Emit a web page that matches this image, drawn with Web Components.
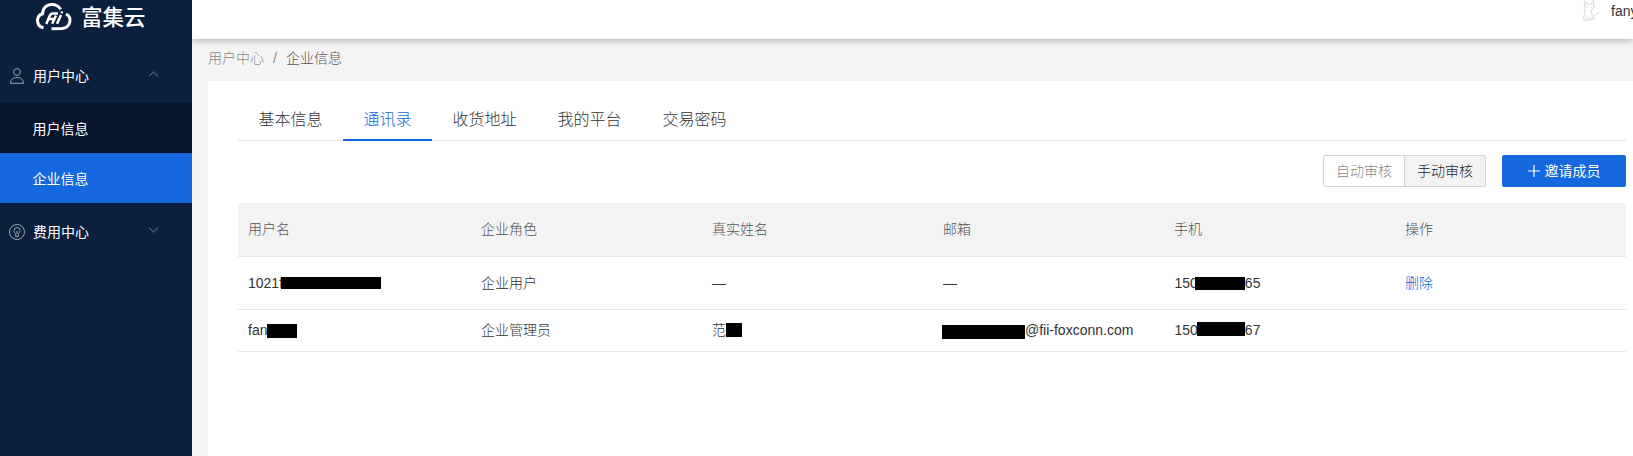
<!DOCTYPE html>
<html lang="zh-CN">
<head>
<meta charset="utf-8">
<title>富集云</title>
<style>
html,body{margin:0;height:456px;overflow:hidden}
body{font:14px/20px "Liberation Sans","Noto Sans CJK SC",sans-serif;color:#333}
</style>
</head>
<body>
<fii-app></fii-app>
<script>
const define = (name, html, setup) => {
  const t = document.createElement('template');
  t.innerHTML = html;
  customElements.define(name, class extends HTMLElement {
    constructor() {
      super();
      this.attachShadow({mode: 'open'}).append(t.content.cloneNode(true));
      if (setup) setup(this.shadowRoot, this);
    }
  });
};

define('fii-logo', `<style>
:host{display:flex;height:50px;padding-left:35px;color:#fff}
svg{flex:none;margin-top:1px}
b{font-size:21.5px;line-height:32px;font-weight:500;margin-left:8px;margin-top:2px;white-space:nowrap}
</style>
<svg width="38" height="32" viewBox="0 0 38 32" fill="none" stroke="#fff" stroke-width="3">
<path d="M8.500 26.800C4 25.800 2.300 22.300 2.500 19c.3-3.500 2.400-5.500 5.100-6.300C7.500 7.200 11.500 3.400 17 3.400c3.900 0 6.900 2 8.700 4.900"/>
<path d="M31 13c3.300 1.700 4.600 4.500 3.800 8-.9 4.200-4 6.100-7.800 6.500l-10.500.2"/>
<path d="M11.300 23 L14.500 15.200Q15.500 12.500 17.800 12.500H23M13.200 18H20M21 14.500L17.200 22.800M26 14L22 22.800" stroke-width="2.500"/>
<path d="M25.700 11.400h2.300" stroke-width="2"/>
</svg><b>富集云</b>`);

define('fii-menu-group', `<style>
:host{display:flex;align-items:center;box-sizing:border-box;height:var(--h,54px);padding:0 33px var(--b,0) 9px;color:#fff}
.i{display:flex;width:16px;height:16px}
.t{margin-left:8px;flex:1;white-space:nowrap}
.a{margin-bottom:3px}
</style><span class="i"><slot name="icon"></slot></span><span class="t"><slot></slot></span>
<svg class="a" width="11" height="6" viewBox="0 0 11 6" fill="none" stroke="#7e8997"><path d="M1 5.300 5.500.900 10 5.300"/></svg>`,
(r, el) => { if (el.hasAttribute('closed')) r.querySelector('.a').style.transform = 'scaleY(-1)'; });

define('fii-menu-item', `<style>
:host{display:flex;align-items:center;box-sizing:border-box;height:50px;padding:2px 0 0 32.500px;background:#06152b;color:#fff}
:host([active]){background:#1467dc}
</style><slot></slot>`);

define('fii-sidebar', `<style>
:host{display:block;width:192px;height:456px;background:#0b203c}
</style>
<fii-logo></fii-logo>
<fii-menu-group style="--h:53px;--b:2px"><svg slot="icon" width="16" height="16" viewBox="0 0 16 16" fill="none" stroke="#9ba5b1"><circle cx="8" cy="4" r="3.400"/><path d="M1.500 15.300C1.500 11.500 4 9.500 8 9.500s6.500 2 6.500 5.800Z"/></svg>用户中心</fii-menu-group>
<fii-menu-item>用户信息</fii-menu-item>
<fii-menu-item active>企业信息</fii-menu-item>
<fii-menu-group closed style="--h:57px"><svg slot="icon" width="16" height="16" viewBox="0 0 16 16" fill="none" stroke="#9ba5b1"><circle cx="8" cy="8" r="7.500"/><path d="M6.700 10.200C6.500 9 5 8.500 5 6.500a3 3 0 0 1 6 0c0 2-1.500 2.500-1.700 3.700v2.300H6.700ZM8 7v3"/></svg>费用中心</fii-menu-group>`);

define('fii-topbar', `<style>
:host{display:flex;justify-content:flex-start;height:39px;background:#fff;box-shadow:0 1px 7px rgba(0,0,0,.3);padding-left:1389px;overflow:visible}
span{margin:1px 0 0 11px;white-space:nowrap}
svg{flex:none}
</style><svg width="19" height="22" viewBox="0 0 19 22" fill="none" stroke="#e6e2e4" stroke-width="1.500"><path d="M4 8 3.500 1.500 6.500 4H10L12.500 1 13 7Q12 10 9.500 10.500L11 14Q12 18 10 20H4Q1.500 20 3 17L4.500 11Q2.500 9.500 4 8M10 20Q14 19 13.500 16L18 12M6 17v3M8.500 17v3"/><path d="M6 7h.8M10 7h.8"/></svg><span>fany</span>`);

define('fii-breadcrumb', `<style>
:host{display:flex;height:42px;padding:9px 0 0 16px;box-sizing:border-box;color:#888}
i{font-style:normal;margin:0 9px}
b{font-weight:inherit;color:#555}
</style><span>用户中心</span><i>/</i><b>企业信息</b>`);

define('fii-tab', `<style>
:host{display:block;box-sizing:border-box;width:105px;height:42px;padding:9px 0 0 20.500px;font-size:16px;line-height:24px;white-space:nowrap}
:host([active]){width:89px;color:#1467dc;border-bottom:2px solid #1467dc}
</style><slot></slot>`);

define('fii-tabs', `<style>
:host{display:flex;height:41px;border-bottom:1px solid #e4e4e4}
</style><slot></slot>`);

define('fii-button', `<style>
:host{display:flex;box-sizing:border-box;align-items:center;justify-content:center;height:32px;width:82px;border:1px solid #d4d4d4;color:#888;border-radius:2px 0 0 2px}
:host([on]){background:#f3f3f3;color:#222;border-radius:0 2px 2px 0;margin-left:-1px}
:host([primary]){background:#1467dc;color:#fff;border-color:#1467dc;width:124px;border-radius:2px;margin-left:16px;font-weight:400}
</style><slot></slot>`);

define('fii-mask', `<style>
:host{display:block;flex:none;background:#000;width:var(--w);height:var(--h);position:relative;top:var(--y,0);margin-left:var(--x,0)}
</style>`);

define('fii-row', `<style>
:host{display:grid;box-sizing:border-box;grid-template-columns:233px repeat(5,231px);height:var(--h);padding-bottom:var(--b,0);border-bottom:1px solid #e5e6e9;align-items:center}
:host([head]){background:#f3f3f3;color:#555}
::slotted(div){display:flex;align-items:center;padding-left:10px;white-space:nowrap}
</style><slot></slot>`);

define('fii-members', `<style>
:host{display:block}
a{color:#1467dc}
.p{margin-left:.5px}
</style>
<fii-row head style="--h:54px;--b:2px"><div>用户名</div><div>企业角色</div><div>真实姓名</div><div>邮箱</div><div>手机</div><div>操作</div></fii-row>
<fii-row style="--h:53px">
<div><span>1021f</span><fii-mask style="--w:100px;--h:12px;--x:-2px"></fii-mask></div><div>企业用户</div><div>—</div><div>—</div>
<div><span class="p">150</span><fii-mask style="--w:50px;--h:13px;--x:-3px"></fii-mask><span>65</span></div><div><a>删除</a></div></fii-row>
<fii-row style="--h:42px;--b:2px">
<div><span>fan</span><fii-mask style="--w:30px;--h:14px;--y:1px;--x:-.5px"></fii-mask></div><div>企业管理员</div>
<div>范<fii-mask style="--w:16px;--h:14px"></fii-mask></div>
<div><fii-mask style="--w:83px;--h:14px;--y:2px;--x:-1px"></fii-mask><span>@fii-foxconn.com</span></div>
<div><span class="p">150</span><fii-mask style="--w:48px;--h:14px;--y:-1px;--x:-1px"></fii-mask><span>67</span></div><div></div></fii-row>`);

define('fii-card', `<style>
:host{display:block;box-sizing:border-box;margin-left:16px;height:375px;padding:18px 7px 0 30px;background:#fff}
.bar{display:flex;justify-content:flex-end;padding:14px 0 16px}
svg{margin-right:5px}
</style>
<fii-tabs><fii-tab>基本信息</fii-tab><fii-tab active>通讯录</fii-tab><fii-tab>收货地址</fii-tab><fii-tab>我的平台</fii-tab><fii-tab>交易密码</fii-tab></fii-tabs>
<div class="bar"><fii-button>自动审核</fii-button><fii-button on>手动审核</fii-button><fii-button primary><svg width="12" height="12" viewBox="0 0 12 12" stroke="#fff" stroke-width="1.200"><path d="M6 0v12M0 6h12"/></svg>邀请成员</fii-button></div>
<fii-members></fii-members>`);

define('fii-app', `<style>
:host{display:grid;grid-template-columns:192px 1441px;width:1633px;height:456px;overflow:hidden;background:#f4f4f4}
main{min-width:0;overflow:hidden;font-weight:300}
fii-topbar{box-sizing:border-box;position:relative}
</style><fii-sidebar></fii-sidebar><main><fii-topbar></fii-topbar><fii-breadcrumb></fii-breadcrumb><fii-card></fii-card></main>`);
</script>
</body>
</html>
